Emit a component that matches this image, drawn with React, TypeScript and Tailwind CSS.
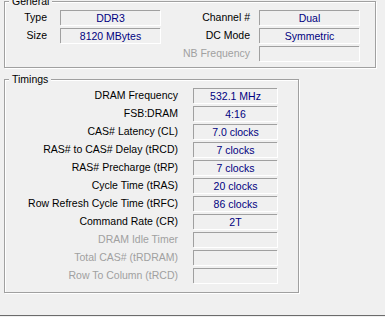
const generalRows = [
  { l: "Type", v: "DDR3", r: "Channel #", rv: "Dual" },
  { l: "Size", v: "8120 MBytes", r: "DC Mode", rv: "Symmetric" },
  { l: "", v: null, r: "NB Frequency", rv: "", rDisabled: true },
];

const timings = [
  { l: "DRAM Frequency", v: "532.1 MHz" },
  { l: "FSB:DRAM", v: "4:16" },
  { l: "CAS# Latency (CL)", v: "7.0 clocks" },
  { l: "RAS# to CAS# Delay (tRCD)", v: "7 clocks" },
  { l: "RAS# Precharge (tRP)", v: "7 clocks" },
  { l: "Cycle Time (tRAS)", v: "20 clocks" },
  { l: "Row Refresh Cycle Time (tRFC)", v: "86 clocks" },
  { l: "Command Rate (CR)", v: "2T" },
  { l: "DRAM Idle Timer", v: "", off: true },
  { l: "Total CAS# (tRDRAM)", v: "", off: true },
  { l: "Row To Column (tRCD)", v: "", off: true },
];

// sunken static box, white edge drawn by the shadow
function Field({ value }: { value: string }) {
  return (
    <div className="h-[15px] border-t border-l border-[#a0a0a0] shadow-[1px_1px_0_#fff] text-center text-[#000080] leading-[14px] whitespace-nowrap">
      {value}
    </div>
  );
}

function GroupBox({ title, className, children }: { title: string; className: string; children: React.ReactNode }) {
  return (
    <div className={`relative border border-[#a0a0a0] shadow-[inset_1px_1px_0_#fff,1px_1px_0_#fff] ${className}`}>
      <span className="absolute left-[4px] top-[-7px] px-[3px] bg-[#f0f0f0] leading-[13px] text-black">{title}</span>
      {children}
    </div>
  );
}

export default function App() {
  return (
    <div
      className="w-[385px] h-[317px] bg-[#f0f0f0] overflow-hidden flex flex-col pt-[1px] text-[10.5px] text-black"
      style={{ fontFamily: '"Liberation Sans", Arial, sans-serif' }}
    >
      {/* General */}
      <GroupBox title="General" className="ml-[4px] w-[372px] h-[67px] pt-[8px]">
        <div className="grid grid-cols-[55px_100px_99px_100px] gap-y-[3px]">
          {generalRows.map((row, i) => (
            <div key={i} className="contents">
              <div className="pr-[13px] text-right leading-[15px]">{row.l}</div>
              {row.v !== null ? <Field value={row.v} /> : <div />}
              <div className={`pr-[9px] text-right leading-[15px] ${row.rDisabled ? "text-[#a0a0a0]" : ""}`}>{row.r}</div>
              <Field value={row.rv} />
            </div>
          ))}
        </div>
      </GroupBox>

      {/* Timings */}
      <GroupBox title="Timings" className="ml-[4px] mt-[11px] w-[295px] h-[214px] pt-[8px]">
        <div className="grid grid-cols-[188px_84px] gap-y-[3px]">
          {timings.map((t) => (
            <div key={t.l} className="contents">
              <div className={`pr-[15px] text-right leading-[15px] whitespace-nowrap ${t.off ? "text-[#a0a0a0]" : ""}`}>{t.l}</div>
              <Field value={t.v} />
            </div>
          ))}
        </div>
      </GroupBox>

      <div className="mt-auto h-[1px] bg-[#6b6b6b] mb-[1px]" />
    </div>
  );
}
